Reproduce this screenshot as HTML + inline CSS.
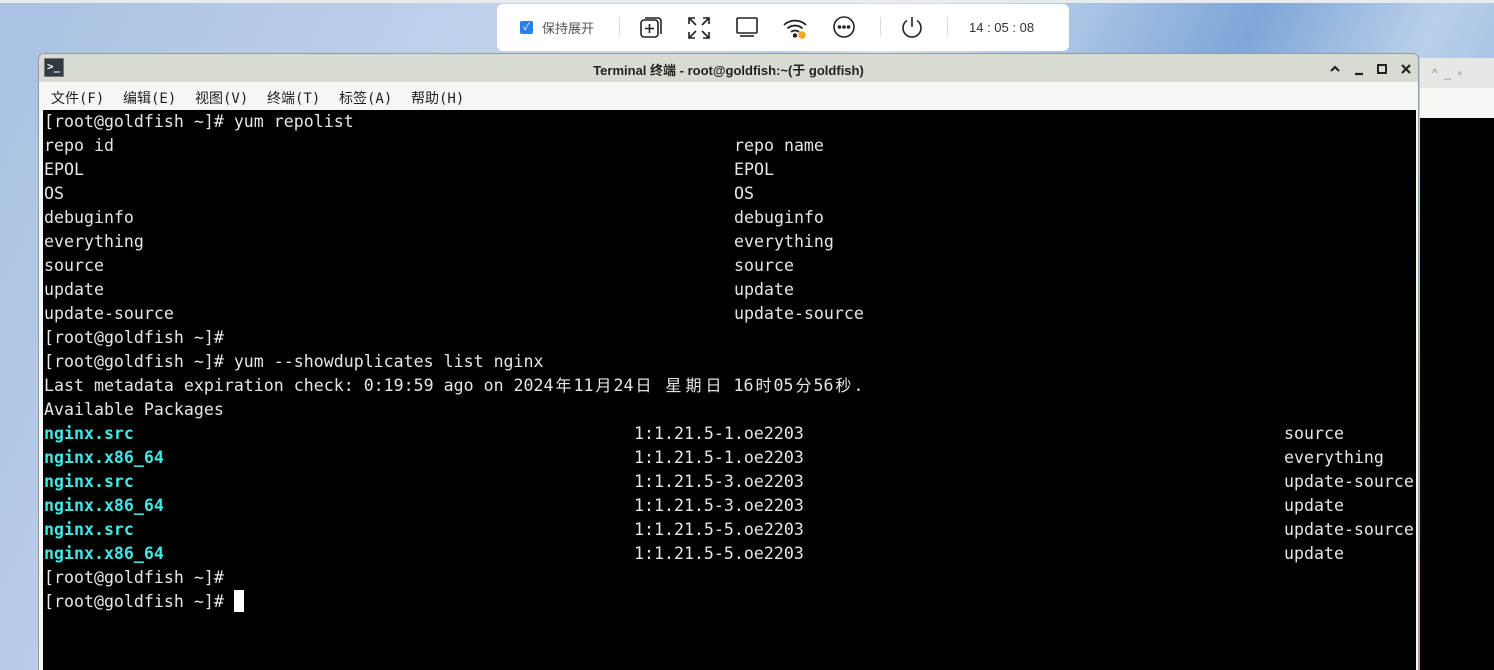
<!DOCTYPE html>
<html><head><meta charset="utf-8"><style>
*{margin:0;padding:0;box-sizing:border-box}
html,body{width:1494px;height:670px;overflow:hidden}
body{position:relative;font-family:"Liberation Sans","Noto Sans CJK SC",sans-serif;
background:linear-gradient(115deg,#a9c2e2 0%,#c4d6ec 35%,#bcd2ea 45%,#d6e3f2 50%,#7ea6d8 70%,#b9d0ea 80%,#6b98d2 100%)}
.top{position:absolute;left:0;top:0;width:1494px;height:3px;background:#e8eaee}
.bar{position:absolute;left:497px;top:4px;width:572px;height:47px;background:#fff;border-radius:6px}
.bar .it{position:absolute;top:0;height:47px;display:flex;align-items:center}
.win{position:absolute;left:38px;top:53px;width:1381px;height:620px;background:#f4f7f3;border:1px solid #9a9a9a;border-radius:6px 6px 0 0;overflow:hidden}
.tb{height:28px;background:#d8dbd2;position:relative}
.tb .t{position:absolute;left:0;right:0;top:6px;text-align:center;font-size:13px;font-weight:bold;color:#222}
.menu{position:absolute;top:28px;left:12px;height:28px;font-family:"DejaVu Sans Mono","Noto Sans CJK SC",monospace;font-size:14px;color:#222;padding-top:6px;white-space:nowrap}
.menu span{position:absolute;top:6px}
.term{position:absolute;left:44px;top:110px;width:1374px;font-family:"DejaVu Sans Mono","Noto Sans CJK SC",monospace;font-size:16.6px;line-height:24px;color:#e6e6e6}
.blk{position:absolute;left:43px;top:110px;width:1373px;height:570px;background:#000}
.l{height:24px;position:relative;white-space:pre}
.c{position:absolute;top:0}
.g{color:#3ee8e8;font-weight:bold}
.k{display:inline-block;width:20px;text-align:center;font-size:16px}
.bg2{position:absolute;left:1420px;top:58px;width:80px;height:620px;background:#f4f7f3}
</style></head><body>
<div class="top"></div>
<div class="bg2"><div style="height:30px;background:#e6e8e3;font-size:12px;color:#888;padding:8px 0 0 12px">^ &nbsp;_ &nbsp;▫</div><div style="position:absolute;top:60px;left:0;right:0;bottom:0;background:#000"></div></div>
<div class="bar">
 <div class="it" style="left:23px"><span style="display:inline-block;width:13px;height:13px;background:#2a7ee8;border-radius:2px;color:#fff;font-size:10px;line-height:13px;text-align:center">✓</span><span style="margin-left:9px;font-size:13px;color:#555">保持展开</span></div>
 <div style="position:absolute;left:122px;top:13px;width:1px;height:20px;background:#ddd"></div>
 <svg style="position:absolute;left:142px;top:12px" width="24" height="24" viewBox="0 0 24 24" fill="none" stroke="#222" stroke-width="1.6"><rect x="2" y="4" width="17" height="17" rx="3"/><path d="M6 2h13a3 3 0 0 1 3 3v13"/><path d="M10.5 8v9M6 12.5h9"/></svg>
 <svg style="position:absolute;left:190px;top:12px" width="24" height="24" viewBox="0 0 24 24" fill="none" stroke="#222" stroke-width="1.6"><path d="M2 8V2h6M2 2l7 7M22 8V2h-6M22 2l-7 7M2 16v6h6M2 22l7-7M22 16v6h-6M22 22l-7-7"/></svg>
 <svg style="position:absolute;left:238px;top:11px" width="24" height="24" viewBox="0 0 24 24" fill="none" stroke="#222" stroke-width="1.6"><rect x="2" y="3" width="20" height="15" rx="1"/><path d="M5 21h14"/></svg>
 <svg style="position:absolute;left:286px;top:12px" width="26" height="24" viewBox="0 0 26 24" fill="none" stroke="#222" stroke-width="1.8"><path d="M1 9a16 16 0 0 1 22 0M4.5 12.5a11 11 0 0 1 15 0M8 16a6 6 0 0 1 8 0"/><circle cx="12" cy="19.5" r="1.3" fill="#222"/><circle cx="19" cy="19" r="3.8" fill="#f5a623" stroke="none"/></svg>
 <svg style="position:absolute;left:335px;top:11px" width="24" height="24" viewBox="0 0 24 24" fill="none" stroke="#222" stroke-width="1.6"><circle cx="12" cy="12" r="10"/><circle cx="7.5" cy="12" r="1" fill="#222"/><circle cx="12" cy="12" r="1" fill="#222"/><circle cx="16.5" cy="12" r="1" fill="#222"/></svg>
 <div style="position:absolute;left:383px;top:13px;width:1px;height:20px;background:#ddd"></div>
 <svg style="position:absolute;left:403px;top:11px" width="24" height="24" viewBox="0 0 24 24" fill="none" stroke="#222" stroke-width="1.6"><path d="M7 5.5a9 9 0 1 0 10 0"/><path d="M12 2v10"/></svg>
 <div style="position:absolute;left:450px;top:13px;width:1px;height:20px;background:#ddd"></div>
 <div class="it" style="left:472px;font-size:13px;color:#333">14 : 05 : 08</div>
</div>
<div class="win">
 <div class="tb"><div style="position:absolute;left:5px;top:4px;width:20px;height:19px;background:#2f3a42;border:1px solid #777;color:#fff;font:bold 11px 'DejaVu Sans Mono',monospace;line-height:16px;padding-left:2px">&gt;_</div><div class="t">Terminal 终端 - root@goldfish:~(于 goldfish)</div>
 <svg style="position:absolute;left:1288px;top:8px" width="90" height="14" viewBox="0 0 90 14" fill="none" stroke="#222" stroke-width="2.2"><path d="M4 9l4-4 4 4"/><path d="M28 12h8"/><rect x="51" y="3" width="8" height="8" stroke-width="2"/><path d="M75 3l8 8M83 3l-8 8"/></svg></div>
 <div class="menu"><span style="left:0">文件(F)</span><span style="left:72px">编辑(E)</span><span style="left:144px">视图(V)</span><span style="left:216px">终端(T)</span><span style="left:288px">标签(A)</span><span style="left:360px">帮助(H)</span></div>
</div>
<div class="blk"></div>
<div class="term">
<div class="l">[root@goldfish ~]# yum repolist</div>
<div class="l">repo id<span class="c" style="left:690px">repo name</span></div>
<div class="l">EPOL<span class="c" style="left:690px">EPOL</span></div>
<div class="l">OS<span class="c" style="left:690px">OS</span></div>
<div class="l">debuginfo<span class="c" style="left:690px">debuginfo</span></div>
<div class="l">everything<span class="c" style="left:690px">everything</span></div>
<div class="l">source<span class="c" style="left:690px">source</span></div>
<div class="l">update<span class="c" style="left:690px">update</span></div>
<div class="l">update-source<span class="c" style="left:690px">update-source</span></div>
<div class="l">[root@goldfish ~]#</div>
<div class="l">[root@goldfish ~]# yum --showduplicates list nginx</div>
<div class="l">Last metadata expiration check: 0:19:59 ago on 2024<span class="k">年</span>11<span class="k">月</span>24<span class="k">日</span> <span class="k">星</span><span class="k">期</span><span class="k">日</span> 16<span class="k">时</span>05<span class="k">分</span>56<span class="k">秒</span>.</div>
<div class="l">Available Packages</div>
<div class="l"><span class="g">nginx.src</span><span class="c" style="left:590px">1:1.21.5-1.oe2203</span><span class="c" style="left:1240px">source</span></div>
<div class="l"><span class="g">nginx.x86_64</span><span class="c" style="left:590px">1:1.21.5-1.oe2203</span><span class="c" style="left:1240px">everything</span></div>
<div class="l"><span class="g">nginx.src</span><span class="c" style="left:590px">1:1.21.5-3.oe2203</span><span class="c" style="left:1240px">update-source</span></div>
<div class="l"><span class="g">nginx.x86_64</span><span class="c" style="left:590px">1:1.21.5-3.oe2203</span><span class="c" style="left:1240px">update</span></div>
<div class="l"><span class="g">nginx.src</span><span class="c" style="left:590px">1:1.21.5-5.oe2203</span><span class="c" style="left:1240px">update-source</span></div>
<div class="l"><span class="g">nginx.x86_64</span><span class="c" style="left:590px">1:1.21.5-5.oe2203</span><span class="c" style="left:1240px">update</span></div>
<div class="l">[root@goldfish ~]#</div>
<div class="l">[root@goldfish ~]# <span style="display:inline-block;width:10px;height:22px;background:#fff;vertical-align:-5px"></span></div>
</div>
</body></html>
